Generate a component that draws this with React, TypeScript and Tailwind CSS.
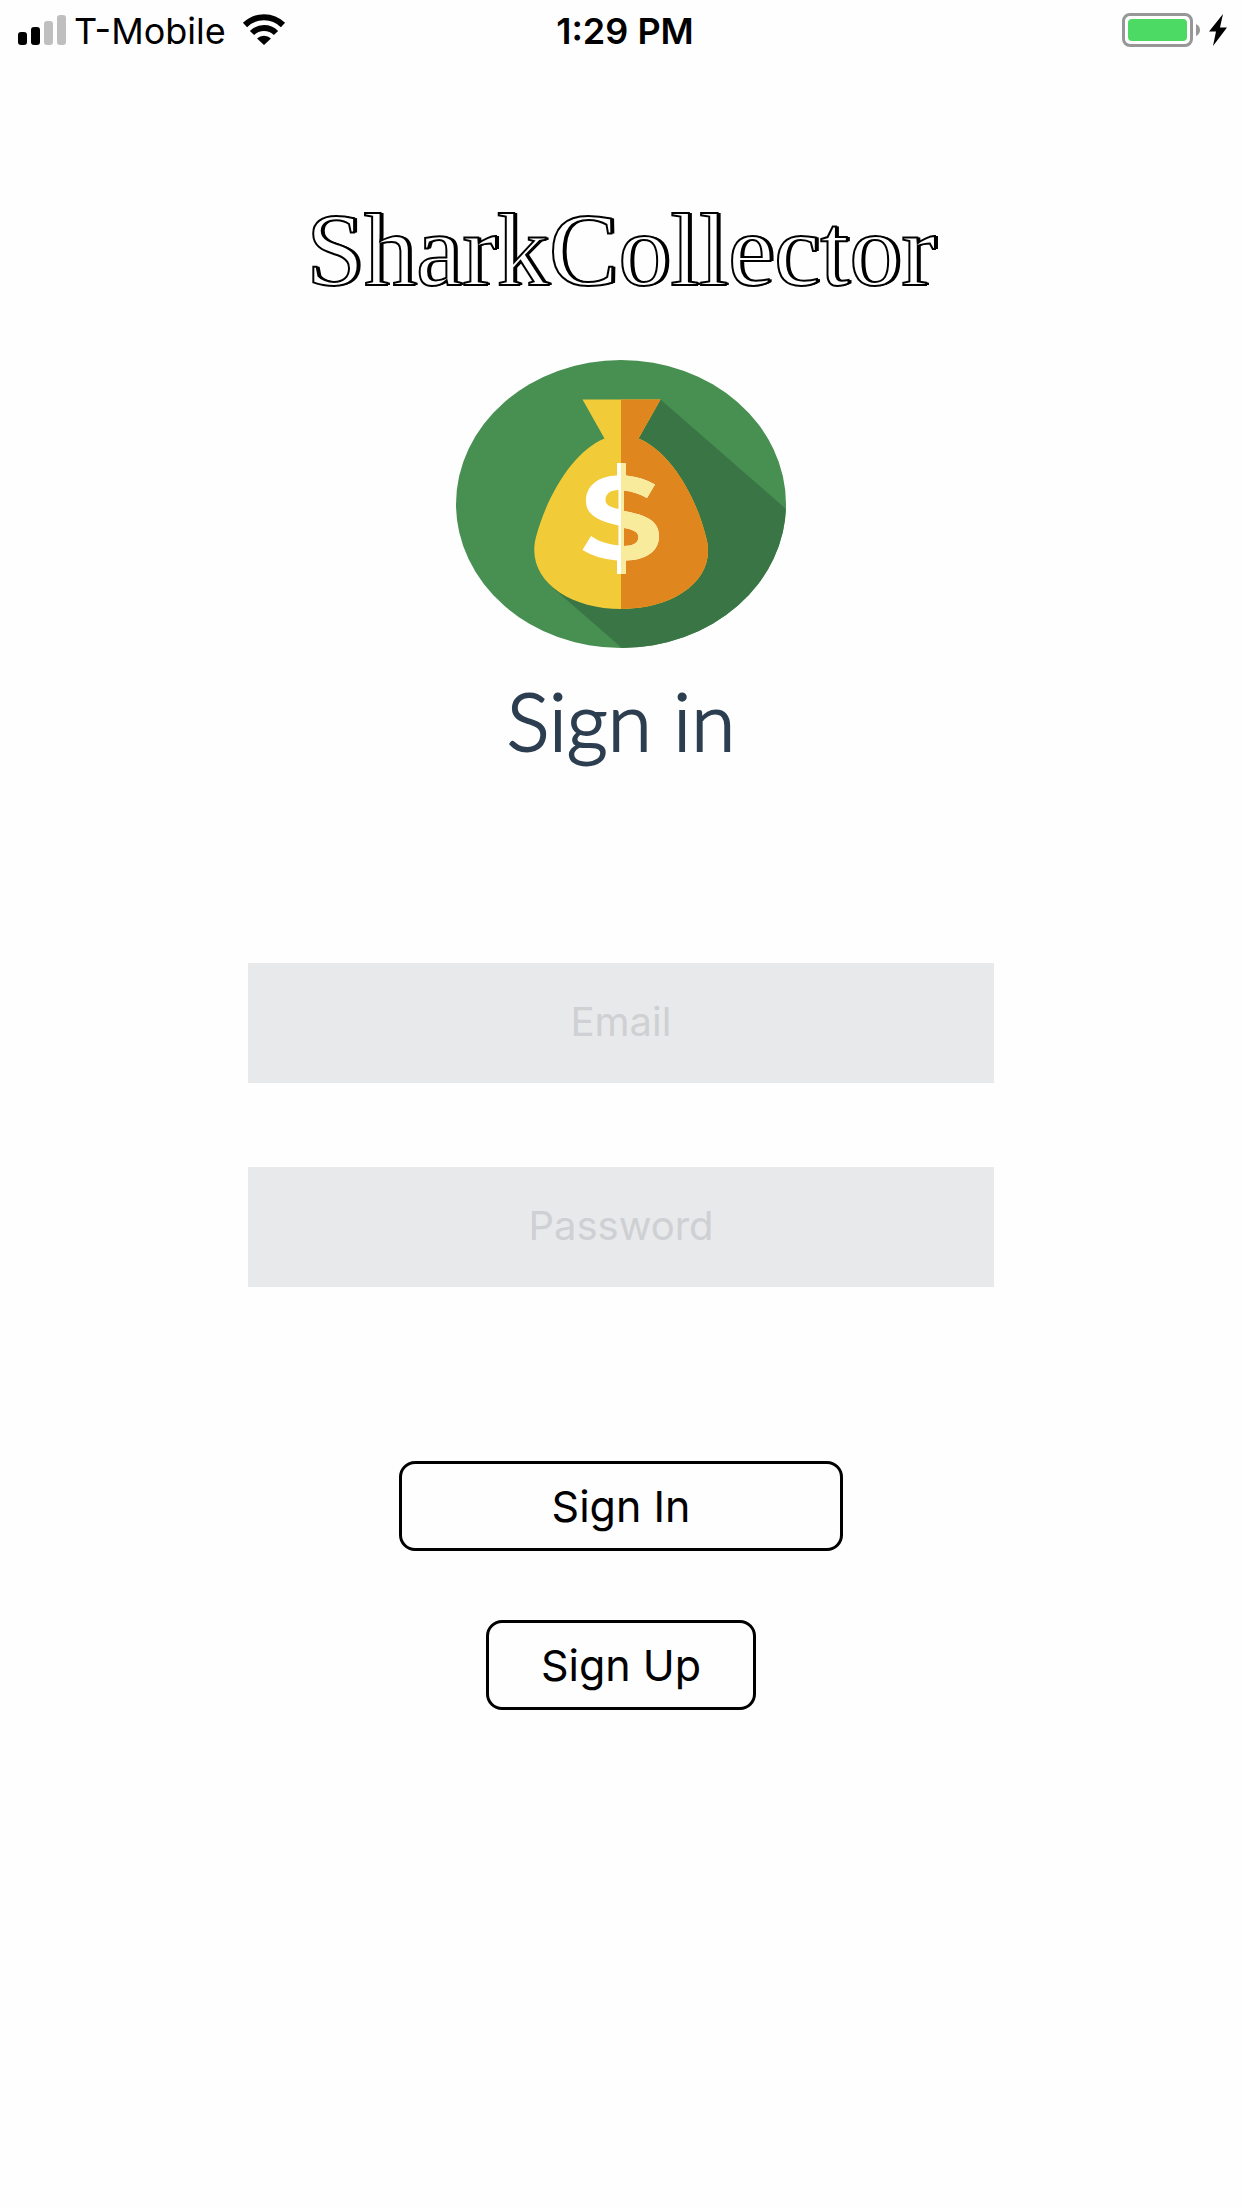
function SignalBars() {
  return (
    <svg className="h-8 w-12" viewBox="0 0 48 32" role="img" aria-label="Signal strength">
      <rect x="0" y="18" width="9" height="13" rx="3" fill="#000" />
      <rect x="13" y="13" width="9" height="18" rx="3" fill="#000" />
      <rect x="26" y="7" width="9" height="24" rx="3" fill="#bfbfbf" />
      <rect x="39" y="1" width="9" height="30" rx="3" fill="#bfbfbf" />
    </svg>
  );
}

function WifiIcon() {
  return (
    <svg className="h-8 w-11" viewBox="0 0 44 32" role="img" aria-label="Wi-Fi">
      <g fill="none" stroke="#000" strokeWidth="6">
        <path d="M3 11 A27 27 0 0 1 41 11" />
        <path d="M10 19 A17 17 0 0 1 34 19" />
      </g>
      <path d="M15 24.5 A10 10 0 0 1 29 24.5 L22 31 Z" fill="#000" />
    </svg>
  );
}

function BatteryIcon() {
  return (
    <svg className="h-9 w-28" viewBox="0 0 112 36" role="img" aria-label="Battery charging">
      <rect x="1.5" y="2.5" width="68" height="31" rx="6.5" fill="none" stroke="#979797" strokeWidth="3" />
      <rect x="6" y="7" width="59" height="22" rx="4" fill="#4cd964" />
      <path d="M74 12 Q78 14 78 18 Q78 22 74 24 Z" fill="#979797" />
      <path d="M101 2 L87 19.500 L94 19.500 L91 34 L105 15.500 L98 15.500 Z" fill="#000" />
    </svg>
  );
}

function StatusBar() {
  return (
    <header className="grid grid-cols-3 items-center px-4 pt-[9px] text-black">
      <div className="flex h-10 items-center gap-2 pl-0.5">
        <SignalBars />
        <span className="mt-0.5 text-[36px] leading-10">T-Mobile</span>
        <div className="ml-2">
          <WifiIcon />
        </div>
      </div>
      <time className="mt-0.5 pl-2 text-center text-[36px] leading-10 font-semibold">1:29 PM</time>
      <div className="-mr-2 flex h-10 items-center justify-end">
        <BatteryIcon />
      </div>
    </header>
  );
}

const BAG =
  "M127.500 39.500 H205.500 L183.500 78.500 C214 91 240 133 251 177 C263 218 221 249 166.500 249 C112 249 70 218 81 177 C93 133 119 91 149.500 78.500 Z";
const DOLLAR =
  "M162 103 H171 V115.500 Q187 117 200 124.500 L192 138 Q182 132 169 130.500 V151 C190 155 204 160 204 176 C204 192 190 200 171 200.500 V214 H162 V200.500 Q142 199 127.500 190 L136 176 Q147 184 163.500 185.500 V165.500 C143 161 131 155 131 141 C131 125 144 116 162 115.500 Z M163.500 130 C155 130 150.500 134 150.500 140 C150.500 145 155 147 163.500 149 Z M169 168 V186 C178 186 183.500 183 183.500 177 C183.500 172 178 169.500 169 168 Z";

function MoneyBagLogo() {
  return (
    <svg className="h-[288px] w-[330px]" viewBox="0 0 330 288" role="img" aria-label="Money bag">
      <defs>
        <clipPath id="disc">
          <ellipse cx="165" cy="144" rx="165" ry="144" />
        </clipPath>
        <clipPath id="right-half">
          <rect x="165" y="0" width="165" height="288" />
        </clipPath>
      </defs>
      <g clipPath="url(#disc)">
        <rect width="330" height="288" fill="#488f52" />
        <path d="M204.500 39.500 L330 149 V288 H166 L97 228 L150 150 L182 78 Z" fill="#3a7545" />
      </g>
      <path d={BAG} transform="translate(-1 0)" fill="#f2cc38" />
      <g clipPath="url(#right-half)">
        <path d={BAG} transform="translate(-1 0)" fill="#df871e" />
      </g>
      <path d={DOLLAR} transform="translate(-1 0)" fill="#ffffff" fillRule="evenodd" />
      <g clipPath="url(#right-half)">
        <path d={DOLLAR} transform="translate(-1 0)" fill="#f9eb9c" fillRule="evenodd" />
      </g>
    </svg>
  );
}

const fieldClass =
  "block h-[120px] w-full bg-[#e8e9eb] pb-1 text-center text-[40px] text-black outline-none placeholder:text-[#ced0d3] placeholder:opacity-100";
const buttonClass =
  "h-[90px] rounded-2xl border-3 border-black text-[43px] leading-none text-black";

export default function App() {
  return (
    <div className="min-h-screen bg-[#fefefe] font-['Inter',sans-serif]">
      <StatusBar />
      <main className="flex flex-col items-center">
        <h1 className="mt-[141px] font-['Liberation_Serif',serif] text-[104px] leading-[116px] text-white [-webkit-text-stroke:2px_black] [text-shadow:2px_0_0_black,3px_0_0_black]">
          SharkCollector
        </h1>
        <div className="mt-[52px]">
          <MoneyBagLogo />
        </div>
        <h2 className="mt-6 font-['Lato',sans-serif] text-[80px] leading-[96px] font-light text-[#2c3e50] [-webkit-text-stroke:2px_#2c3e50]">
          Sign in
        </h2>
        <form className="mt-[195px] flex w-3/5 flex-col items-center" onSubmit={(e) => e.preventDefault()}>
          <input type="email" aria-label="Email" placeholder="Email" className={fieldClass} />
          <input type="password" aria-label="Password" placeholder="Password" className={`${fieldClass} mt-21`} />
          <button type="submit" className={`${buttonClass} mt-[174px] w-[444px]`}>
            Sign In
          </button>
          <button type="button" className={`${buttonClass} mt-[69px] w-[270px]`}>
            Sign Up
          </button>
        </form>
      </main>
    </div>
  );
}
